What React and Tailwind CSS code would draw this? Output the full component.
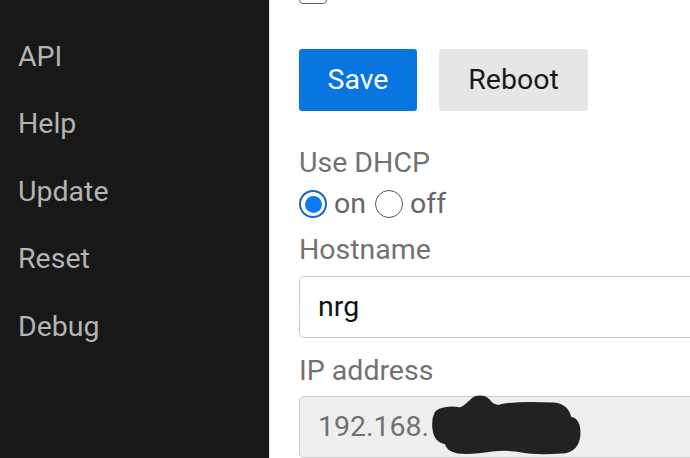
import React from 'react'

const menu = ['Logs', 'API', 'Help', 'Update', 'Reset', 'Debug']

const Radio = ({ checked }) => (
  <span
    className={
      checked
        ? 'flex h-[28px] w-[28px] items-center justify-center rounded-full border-[2.5px] border-[#1766c6] bg-white'
        : 'flex h-[28px] w-[28px] rounded-full border-[1.5px] border-[#555] bg-white'
    }
  >
    {checked && <span className="h-[17px] w-[17px] rounded-full bg-[#0c7cf2]" />}
  </span>
)

// black marker scribble over the last octets
const Redaction = () => (
  <svg
    className="absolute left-[132px] top-[-2px]"
    width="150"
    height="60"
    viewBox="0 0 150 60"
  >
    <path
      d="M4 18 C8 13 20 12 28 14 C33 12 36 9 40 5 C44 1 52 1 56 5 C59 9 62 12 68 11 C80 8 100 8 122 9 C131 10 136 14 138 23 C144 24 147 28 147 38 C147 50 140 57 130 57 C115 58 100 58 90 56 C80 54 70 54 60 55 C48 57 36 58 26 57 C18 56 15 52 14 48 C6 46 3 42 2 34 C1 26 2 22 4 18 Z"
      fill="#222"
      stroke="#222"
      strokeWidth="3"
      strokeLinejoin="round"
    />
  </svg>
)

export default function App() {
  return (
    <div className="flex h-[458px] w-[690px] overflow-hidden bg-white font-['Roboto',sans-serif] text-[28.5px]">
      <aside className="w-[269px] shrink-0 bg-[#181818]">
        <ul className="-mt-[45px] pl-[18px] text-[#b4b4b4]">
          {menu.map((m, i) => (
            <li key={m} className={i === 0 ? 'relative -top-[5px] leading-[67.5px]' : 'leading-[67.5px]'}>
              {m}
            </li>
          ))}
        </ul>
      </aside>

      <main className="flex min-w-0 flex-1 flex-col border-l border-[#e2e2e2] pl-[29px]">
        <span className="-mt-[24px] block h-[28px] w-[28px] rounded-[4px] border-[1.5px] border-[#666]" />

        <div className="mt-[45px] flex gap-[22px]">
          <button className="h-[62px] w-[118px] rounded-[3px] bg-[#0875e1] text-white">
            Save
          </button>
          <button className="h-[62px] w-[149px] rounded-[3px] bg-[#e6e6e6] text-[#1a1a1a]">
            Reboot
          </button>
        </div>

        <label className="mt-[34px] leading-[36px] text-[#727272]">Use DHCP</label>
        <div className="mt-[5px] flex h-[36px] items-center text-[#666]">
          <Radio checked />
          <span className="ml-[7px] mr-[9px] leading-[36px]">on</span>
          <Radio />
          <span className="ml-[7px] leading-[36px]">off</span>
        </div>

        <label className="mt-[10px] leading-[36px] text-[#727272]">Hostname</label>
        <div className="mt-[8px] flex h-[62px] w-[420px] shrink-0 items-center rounded-[5px] border border-[#c9c9c9] bg-white pl-[18px] text-[#111]">
          nrg
        </div>

        <label className="mt-[15px] leading-[36px] text-[#727272]">IP address</label>
        <div className="relative mt-[7px] flex h-[62px] w-[420px] shrink-0 items-center rounded-[5px] border border-[#cdcdcd] bg-[#eeeeee] pl-[18px] text-[#717171]">
          192.168.
          <Redaction />
        </div>
      </main>
    </div>
  )
}
